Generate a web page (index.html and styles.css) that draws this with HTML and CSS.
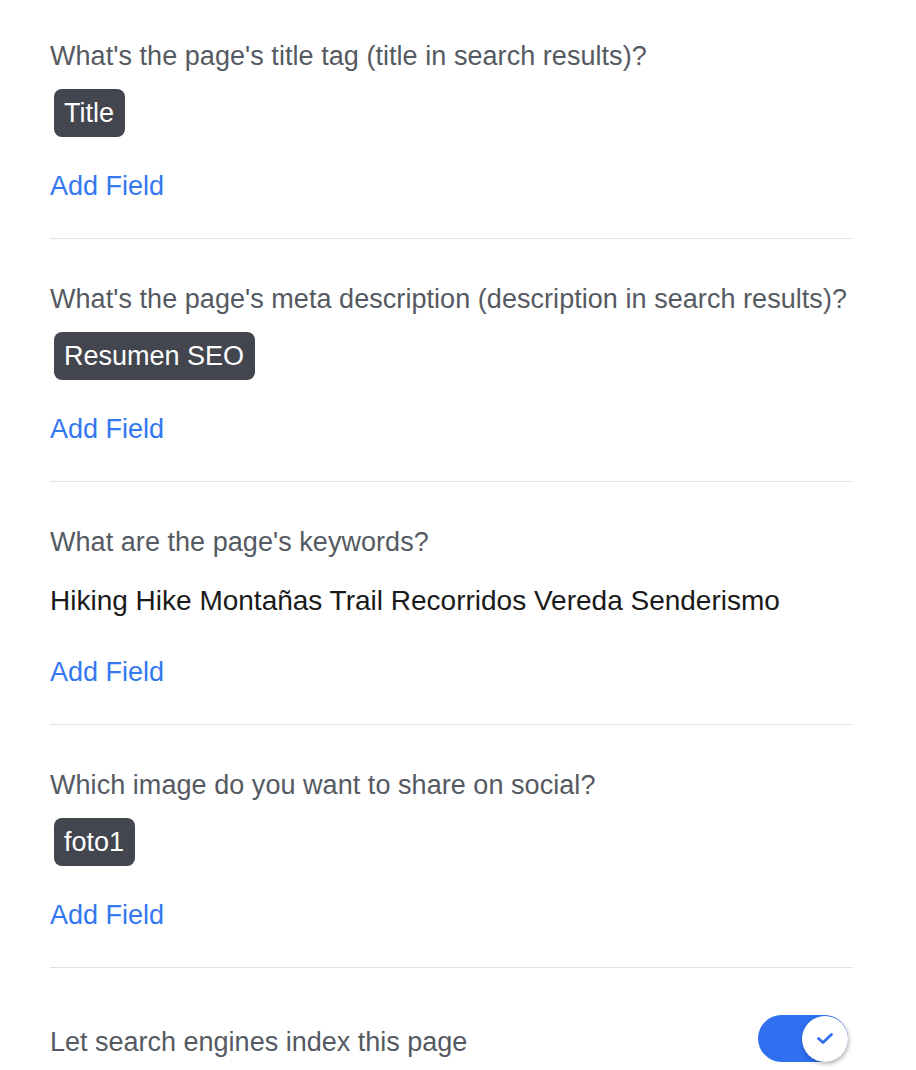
FILE: index.html
```html
<!DOCTYPE html>
<html>
<head>
<meta charset="utf-8">
<link rel="stylesheet" href="styles.css">
</head>
<body>
<div class="page">
  <section class="block first">
    <div class="question">What's the page's title tag (title in search results)?</div>
    <div class="values"><span class="chip">Title</span></div>
    <a class="add">Add Field</a>
  </section>
  <section class="block">
    <div class="question">What's the page's meta description (description in search results)?</div>
    <div class="values"><span class="chip">Resumen SEO</span></div>
    <a class="add">Add Field</a>
  </section>
  <section class="block">
    <div class="question">What are the page's keywords?</div>
    <div class="values"><span class="plain">Hiking Hike Montañas Trail Recorridos Vereda Senderismo</span></div>
    <a class="add">Add Field</a>
  </section>
  <section class="block">
    <div class="question">Which image do you want to share on social?</div>
    <div class="values"><span class="chip">foto1</span></div>
    <a class="add">Add Field</a>
  </section>
  <section class="block last">
    <div class="toggle-row">
      <span class="toggle-label">Let search engines index this page</span>
      <span class="toggle">
        <span class="knob">
          <svg width="18" height="13" viewBox="0 0 18 13"><path d="M2.5 6.5 L7 10.5 L15.5 2.5" fill="none" stroke="#2f6ff0" stroke-width="2.8" stroke-linecap="round" stroke-linejoin="round"/></svg>
        </span>
      </span>
    </div>
  </section>
</div>
</body>
</html>
```
FILE: styles.css
```css
html, body {
  margin: 0;
  padding: 0;
  background: #ffffff;
}
body {
  font-family: "Liberation Sans", Arial, sans-serif;
}
.page {
  width: 803px;
  margin-left: 50px;
}
.block {
  display: flex;
  flex-direction: column;
  align-items: flex-start;
  padding: 45px 0 37px;
  border-bottom: 1px solid #e1e1e1;
}
.block.first {
  padding-top: 41px;
}
.block.last {
  border-bottom: none;
  padding-top: 47px;
}
.question {
  font-size: 27px;
  line-height: 30px;
  color: #555a62;
  letter-spacing: 0.05px;
}
.values {
  height: 48px;
  margin-top: 18px;
  display: flex;
  align-items: center;
}
.chip {
  margin-left: 4px;
  height: 48px;
  box-sizing: border-box;
  padding: 0 11px 0 10px;
  display: inline-flex;
  align-items: center;
  background: #43464f;
  color: #ffffff;
  border-radius: 8px;
  font-size: 27px;
}
.plain {
  font-size: 28px;
  color: #1a1a1a;
  padding-top: 4px;
}
.add {
  margin-top: 34px;
  font-size: 27px;
  line-height: 30px;
  color: #3378f0;
  cursor: pointer;
}
.toggle-row {
  width: 100%;
  display: flex;
  align-items: center;
  justify-content: space-between;
}
.toggle-label {
  font-size: 27px;
  line-height: 30px;
  color: #555a62;
  padding-top: 6px;
}
.toggle {
  width: 90px;
  height: 47px;
  margin-right: 5px;
  border-radius: 24px;
  background: #2f6ff0;
  display: flex;
  align-items: center;
  justify-content: flex-end;
}
.knob {
  width: 46px;
  height: 46px;
  border-radius: 50%;
  background: #ffffff;
  box-shadow: 1px 2px 4px rgba(0,0,0,0.3);
  display: flex;
  align-items: center;
  justify-content: center;
}
```
